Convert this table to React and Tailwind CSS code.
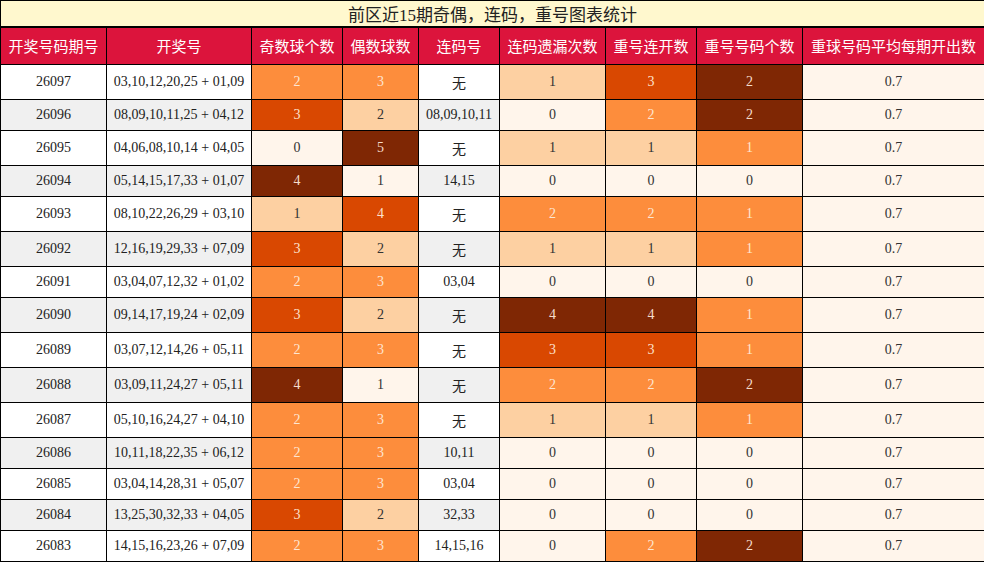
import React from "react";

// 前区近15期 data
const rows = [
  ["26097", "03,10,12,20,25 + 01,09", 2, 3, "无", 1, 3, 2],
  ["26096", "08,09,10,11,25 + 04,12", 3, 2, "08,09,10,11", 0, 2, 2],
  ["26095", "04,06,08,10,14 + 04,05", 0, 5, "无", 1, 1, 1],
  ["26094", "05,14,15,17,33 + 01,07", 4, 1, "14,15", 0, 0, 0],
  ["26093", "08,10,22,26,29 + 03,10", 1, 4, "无", 2, 2, 1],
  ["26092", "12,16,19,29,33 + 07,09", 3, 2, "无", 1, 1, 1],
  ["26091", "03,04,07,12,32 + 01,02", 2, 3, "03,04", 0, 0, 0],
  ["26090", "09,14,17,19,24 + 02,09", 3, 2, "无", 4, 4, 1],
  ["26089", "03,07,12,14,26 + 05,11", 2, 3, "无", 3, 3, 1],
  ["26088", "03,09,11,24,27 + 05,11", 4, 1, "无", 2, 2, 2],
  ["26087", "05,10,16,24,27 + 04,10", 2, 3, "无", 1, 1, 1],
  ["26086", "10,11,18,22,35 + 06,12", 2, 3, "10,11", 0, 0, 0],
  ["26085", "03,04,14,28,31 + 05,07", 2, 3, "03,04", 0, 0, 0],
  ["26084", "13,25,30,32,33 + 04,05", 3, 2, "32,33", 0, 0, 0],
  ["26083", "14,15,16,23,26 + 07,09", 2, 3, "14,15,16", 0, 2, 2],
];

const headers = [
  "开奖号码期号",
  "开奖号",
  "奇数球个数",
  "偶数球数",
  "连码号",
  "连码遗漏次数",
  "重号连开数",
  "重号号码个数",
  "重球号码平均每期开出数",
];

const widths = ["w-[106px]", "w-[145px]", "w-[91px]", "w-[76px]", "w-[81px]", "w-[106px]", "w-[91px]", "w-[106px]", "w-[182px]"];

// heat level classes: 0 lightest ... 4 darkest
const heat = [
  "bg-[#fff5eb] text-[#333]",
  "bg-[#fdd0a2] text-[#333]",
  "bg-[#fd8d3c] text-[#fde6d2]",
  "bg-[#d94801] text-[#fde0cc]",
  "bg-[#7f2704] text-[#f5dccb]",
];

// map a value to a level using the column's min / max
const level = (v, min, max) => Math.round(((v - min) / (max - min)) * 4);

const cell = "border border-black text-center align-middle p-0";

export default function App() {
  const cols = [2, 3, 5, 6, 7];
  const ranges = {};
  cols.forEach((c) => {
    const vals = rows.map((r) => r[c]);
    ranges[c] = [Math.min(...vals), Math.max(...vals)];
  });

  return (
    <div className="w-[984px] h-[562px] bg-white font-['Liberation_Serif','Noto_Sans_CJK_SC',serif] leading-[normal]">
      <table className="w-[983px] table-fixed border-collapse">
        <colgroup>
          {widths.map((w, i) => (
            <col key={i} className={w} />
          ))}
        </colgroup>
        <thead>
          <tr className="h-[26px]">
            <th colSpan={9} className="border border-black border-b-2 bg-[#fff8ce] text-[17px] font-normal text-[#222] p-0">
              前区近15期奇偶，连码，重号图表统计
            </th>
          </tr>
          <tr className="h-[37px]">
            {headers.map((h) => (
              <th key={h} className={`${cell} bg-[#dc143c] text-white text-[15px] font-normal`}>
                {h}
              </th>
            ))}
          </tr>
        </thead>
        <tbody className="text-[14px] text-[#222]">
          {rows.map((r, i) => {
            const plain = i % 2 === 0 ? "bg-white" : "bg-[#f0f0f0]";
            const tall = r[4] === "无";
            return (
              <tr key={r[0]} className={tall ? "h-[35px]" : "h-[31px]"}>
                <td className={`${cell} ${plain}`}>{r[0]}</td>
                <td className={`${cell} ${plain}`}>{r[1]}</td>
                <td className={`${cell} ${heat[level(r[2], ...ranges[2])]}`}>{r[2]}</td>
                <td className={`${cell} ${heat[level(r[3], ...ranges[3])]}`}>{r[3]}</td>
                <td className={`${cell} ${plain}`}>{r[4]}</td>
                <td className={`${cell} ${heat[level(r[5], ...ranges[5])]}`}>{r[5]}</td>
                <td className={`${cell} ${heat[level(r[6], ...ranges[6])]}`}>{r[6]}</td>
                <td className={`${cell} ${heat[level(r[7], ...ranges[7])]}`}>{r[7]}</td>
                <td className={`${cell} ${heat[0]}`}>0.7</td>
              </tr>
            );
          })}
        </tbody>
      </table>
    </div>
  );
}
